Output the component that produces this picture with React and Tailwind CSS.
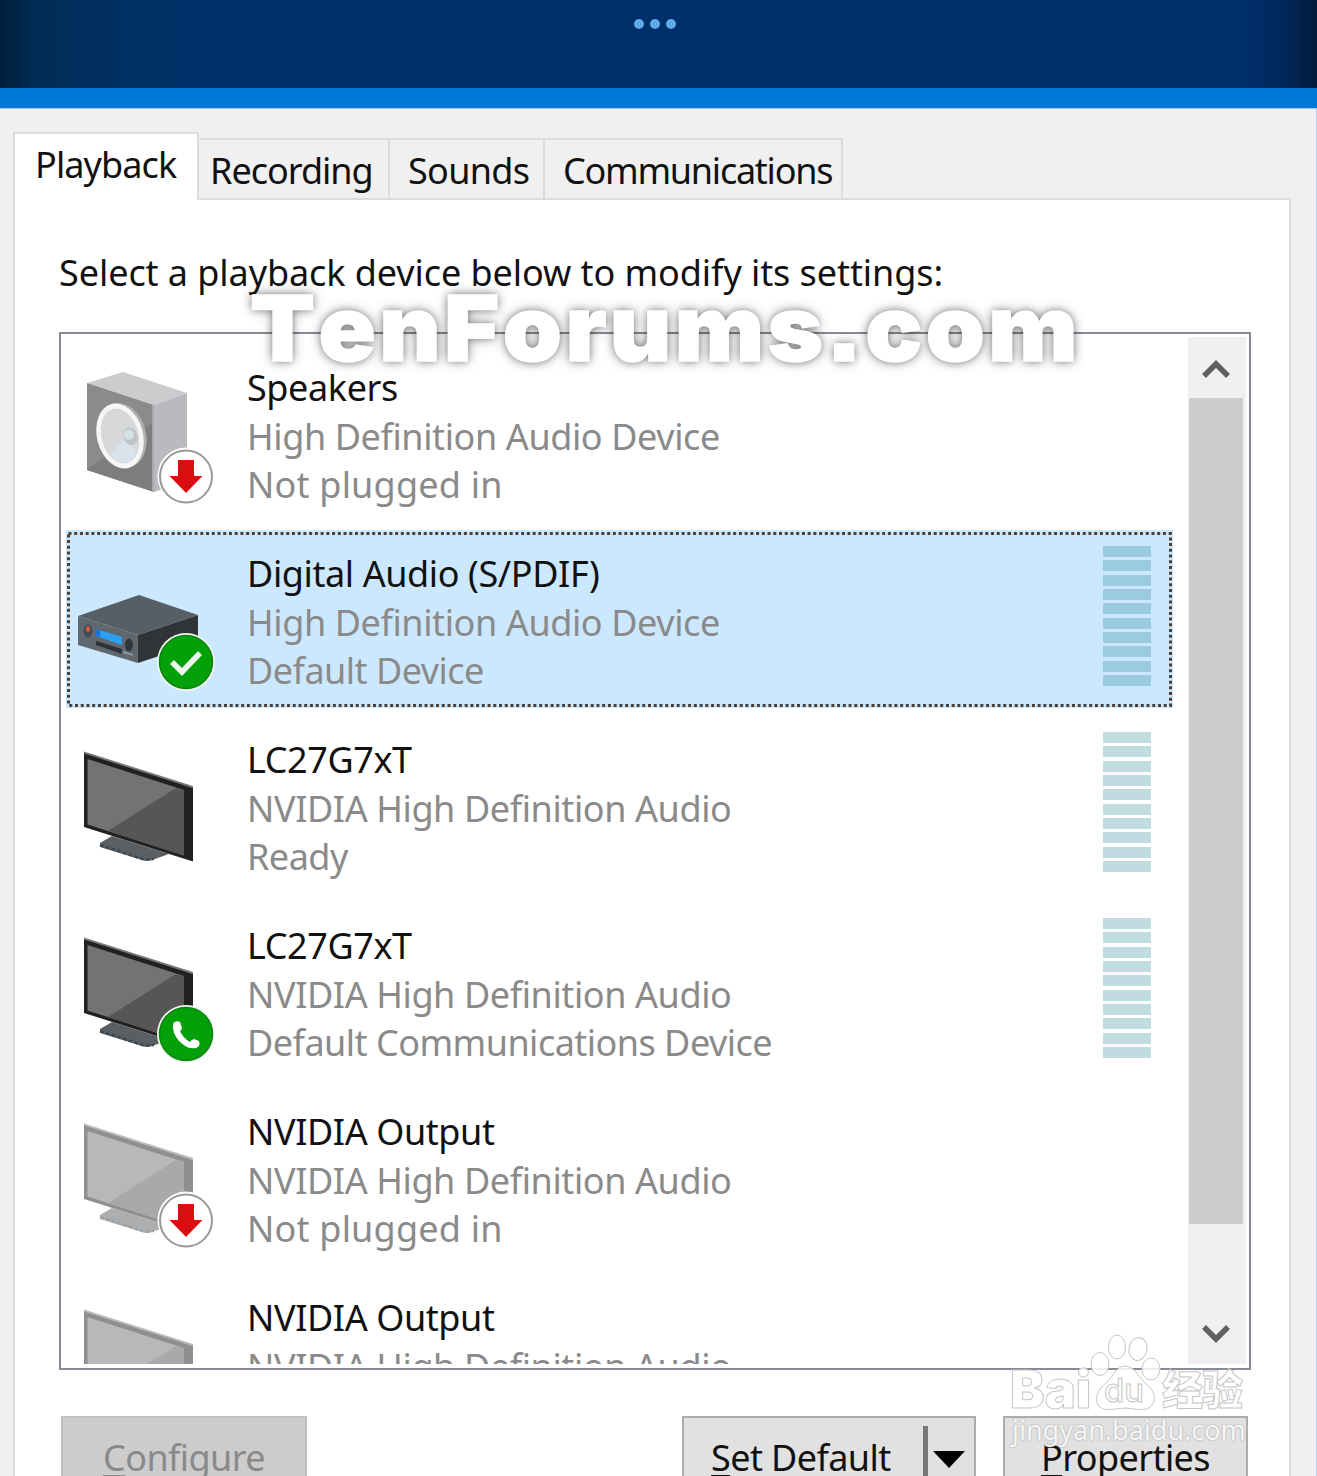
import clsx from 'clsx';

const devices = [
  { id: 1, name: 'Speakers', driver: 'High Definition Audio Device', status: 'Not plugged in', icon: 'speaker', badge: 'down' },
  { id: 2, name: 'Digital Audio (S/PDIF)', driver: 'High Definition Audio Device', status: 'Default Device', icon: 'receiver', badge: 'check', meter: true, selected: true },
  { id: 3, name: 'LC27G7xT', driver: 'NVIDIA High Definition Audio', status: 'Ready', icon: 'tv', meter: true },
  { id: 4, name: 'LC27G7xT', driver: 'NVIDIA High Definition Audio', status: 'Default Communications Device', icon: 'tv', badge: 'phone', meter: true },
  { id: 5, name: 'NVIDIA Output', driver: 'NVIDIA High Definition Audio', status: 'Not plugged in', icon: 'tv', badge: 'down', faded: true },
  { id: 6, name: 'NVIDIA Output', driver: 'NVIDIA High Definition Audio', status: 'Not plugged in', icon: 'tv', badge: 'down', faded: true },
];

const tabs = [
  { label: 'Recording', className: 'w-[191px] pl-[11px] tracking-[-1px]' },
  { label: 'Sounds', className: 'w-[155px] pl-[18px] tracking-[-0.700px]' },
  { label: 'Communications', className: 'w-[298px] pl-[18px] tracking-[-1.250px]' },
];

function Speaker() {
  return (
    <g>
      <path d="M21 39 57 28 121 49 88 61Z" fill="#cbcccd" />
      <path d="M88 61 121 49V137L88 148Z" fill="#b9babf" />
      <path d="M21 39 88 61V148L21 126Z" fill="#8b8b8b" />
      <path d="M88 61V148L21 126 88 78Z" fill="#7d7d7d" />
      <path d="M87 61V148" stroke="#a9a9a9" strokeWidth="2" />
      <g transform="rotate(-15 54 92)">
        <ellipse cx="56" cy="92" rx="24" ry="33" fill="#b0b0b0" />
        <ellipse cx="54" cy="92" rx="23" ry="33" fill="#f6f6f6" />
        <ellipse cx="54" cy="92" rx="18.500" ry="28" fill="#d6d8d9" />
        <path d="M40 106 60 96 66 112Q60 120 53 120 44 116 40 106Z" fill="#dbe3ea" />
        <ellipse cx="64" cy="95" rx="7" ry="9" fill="#bfc3c5" />
        <ellipse cx="63" cy="93" rx="5" ry="5" fill="#d5e2e3" />
      </g>
    </g>
  );
}

function Receiver() {
  return (
    <g>
      <path d="M12 86 73 65 132 85 72 105Z" fill="#565f66" />
      <path d="M12 86 72 105V133L12 115Z" fill="#5f686e" />
      <path d="M72 105 132 85V113L72 133Z" fill="#303436" />
      <path d="M30 99 56 107V115L30 106Z" fill="#2ba0f5" />
      <path d="M30 99 34 100V107.500L30 106Z" fill="#1b72dd" />
      <path d="M30 111 56 119V124L30 115Z" fill="#2e3236" />
      <ellipse cx="22" cy="101" rx="4.500" ry="6.500" fill="#454b50" />
      <ellipse cx="22" cy="99" rx="2" ry="3" fill="#d9543c" />
      <ellipse cx="63" cy="115" rx="4" ry="6.500" fill="#31363a" />
      <path d="M57 122 67 125" stroke="#8d959a" strokeWidth="2" />
    </g>
  );
}

function Tv({ faded }) {
  return (
    <g opacity={faded ? 0.5 : 1}>
      <path d="M34 127 46 120 103 138 86 144Q81 146 76 144L34 131Z" fill="#5c5f61" />
      <path d="M34 129 78 143.500 88 143" stroke="#3e4952" strokeWidth="2.500" fill="none" strokeDasharray="4 2" />
      <path d="M18 35.500 127 70V72L18 40Z" fill="#777" />
      <path d="M18 37.500 127 72V145.500L18 111Z" fill="#212121" />
      <path d="M21.500 43 118 74V139.500L21.500 108.500Z" fill="#737373" />
      <path d="M118 74V139.500L42 115 110 72Z" fill="#565656" />
    </g>
  );
}

function Badge({ type }) {
  if (type === 'down') {
    return (
      <g>
        <circle cx="120" cy="132" r="28.500" fill="#fff" />
        <circle cx="120" cy="132.500" r="26" fill="#fff" stroke="#999" strokeWidth="2" />
        <path d="M112 116H128V132H136.500L120 149 103.500 132H112Z" fill="#da0d10" />
      </g>
    );
  }

  return (
    <g>
      <circle cx="120" cy="132" r="29" fill="#f3f7f3" />
      <circle cx="120" cy="132" r="26.500" fill="#04a00a" stroke="#0a8410" strokeWidth="1.500" />
      {type === 'check' && <path d="M106 132 116 142 134 123" fill="none" stroke="#eef5ee" strokeWidth="5.500" />}
      {type === 'phone' && (
        <path
          d="M107 122Q109 118 114 120L116 126Q115 129 114 129Q117 136 124 140Q125 138 128 137L133 139Q135 144 130 146Q122 148 113 139Q106 131 107 122Z"
          fill="#fff"
        />
      )}
    </g>
  );
}

function DeviceIcon({ icon, badge, faded }) {
  return (
    <svg viewBox="0 0 160 178" className="h-[178px] w-[160px] shrink-0">
      {icon === 'speaker' && <Speaker />}
      {icon === 'receiver' && <Receiver />}
      {icon === 'tv' && <Tv faded={faded} />}
      {badge && <Badge type={badge} />}
    </svg>
  );
}

function Meter({ selected }) {
  return (
    <div className="mt-4 mr-[22px] ml-auto flex h-[140px] w-[48px] flex-col justify-between">
      {Array.from({ length: 10 }, (_, i) => (
        <div key={i} className={clsx('h-[11px]', selected ? 'bg-[#9bcbe1]' : 'bg-[#c1dce1]')} />
      ))}
    </div>
  );
}

function DeviceRow({ device }) {
  return (
    <div className={clsx('relative mb-2 flex h-[178px] w-[1107px] shrink-0', device.selected && 'bg-[#cce8ff]')}>
      <DeviceIcon icon={device.icon} badge={device.badge} faded={device.faded} />
      <div className="ml-[21px] pt-[20px] leading-[48.700px] tracking-[-0.400px] whitespace-nowrap text-[#8a8a8a]">
        <p className="text-[#111]">{device.name}</p>
        <p>{device.driver}</p>
        <p className={device.badge === 'down' ? 'tracking-[0.200px]' : 'tracking-[-0.520px]'}>{device.status}</p>
      </div>
      {device.meter && <Meter selected={device.selected} />}
      {device.selected && (
        <svg className="absolute inset-0 h-full w-full">
          <rect x="2.500" y="3.500" width="1102" height="172" fill="none" stroke="#4b4038" strokeWidth="3" strokeDasharray="3 2.730" />
        </svg>
      )}
    </div>
  );
}

function Scrollbar() {
  return (
    <div className="ml-[15px] flex h-[1027px] w-[58px] flex-col bg-[#f0f0f0]">
      <div className="flex h-[61px] w-[55px] items-center justify-center">
        <svg width="28" height="22" viewBox="0 0 28 22">
          <path d="M2 19 14 7 26 19" fill="none" stroke="#606060" strokeWidth="5.500" />
        </svg>
      </div>
      <div className="ml-px h-[826px] w-[54px] bg-[#cdcdcd]" />
      <div className="flex h-[140px] w-[55px] items-end justify-center pb-[19px]">
        <svg width="28" height="22" viewBox="0 0 28 22">
          <path d="M2 4 14 16 26 4" fill="none" stroke="#606060" strokeWidth="5.500" />
        </svg>
      </div>
    </div>
  );
}

// Button text with its access key underlined
function Label({ text }) {
  return (
    <span className="tracking-[-0.600px]">
      <span className="underline decoration-[3px] underline-offset-[4px]">{text[0]}</span>
      {text.slice(1)}
    </span>
  );
}

function Watermarks() {
  return (
    <>
      <div className="absolute top-[264px] left-[250px] origin-left scale-x-[1.04] font-['Inter'] text-[91px] leading-[128px] font-black tracking-[3.300px] whitespace-nowrap text-white [font-feature-settings:'ss07'] [font-kerning:none] [-webkit-text-stroke:1.500px_white] [text-shadow:0_0_12px_rgba(0,0,0,0.4),0_0_7px_rgba(0,0,0,0.35)]">
        TenForums.com
      </div>
      <svg className="absolute top-[1330px] left-[1000px]" width="260" height="120" viewBox="1000 1330 260 120">
        <g fill="#fff" fillOpacity="0.85" stroke="#c6c6c6" strokeWidth="1">
          <ellipse cx="1100" cy="1364" rx="9" ry="11.500" />
          <ellipse cx="1117" cy="1347" rx="8.500" ry="12" />
          <ellipse cx="1138" cy="1349" rx="9" ry="11.500" transform="rotate(12 1138 1349)" />
          <ellipse cx="1151" cy="1369" rx="9" ry="11" />
          <path d="M1125 1366C1116 1366 1114 1376 1106 1383C1098 1390 1094 1398 1098 1405C1103 1412 1113 1409 1125 1408C1138 1409 1147 1412 1152 1405C1157 1398 1154 1390 1146 1384C1138 1376 1134 1366 1125 1366Z" />
          <text x="1010" y="1408" fontFamily="Inter, sans-serif" fontWeight="900" fontSize="52" textLength="81" lengthAdjust="spacingAndGlyphs">Bai</text>
          <text x="1104" y="1402" fontFamily="Inter, sans-serif" fontWeight="500" fontSize="32" textLength="40" lengthAdjust="spacingAndGlyphs">du</text>
          <text x="1162" y="1405" fontFamily="'Noto Sans CJK SC', sans-serif" fontWeight="900" fontSize="41" textLength="81">经验</text>
        </g>
      </svg>
      <div className="absolute top-[1412px] left-[1012px] font-['Noto_Sans'] text-[27px] leading-[36px] whitespace-nowrap text-white/90 [text-shadow:0_0_2px_rgba(0,0,0,0.35)]">
        jingyan.baidu.com
      </div>
    </>
  );
}

export default function App() {
  return (
    <div className="relative h-[1476px] w-[1317px] overflow-hidden bg-[#f0f0f0] font-['Noto_Sans',sans-serif] text-[36px] text-[#111]">
      <header className="flex h-[88px] justify-center gap-[6px] bg-[linear-gradient(90deg,#001d3a_0,#002c55_35px,#003064_130px,#002f6b_260px,#002f6b_1240px,#002a60_1275px,#001a3c_1317px)] pt-[19px] pr-[7px]">
        <span className="size-[10px] rounded-full bg-[#5ea9e8]" />
        <span className="size-[10px] rounded-full bg-[#5ea9e8]" />
        <span className="size-[10px] rounded-full bg-[#5ea9e8]" />
      </header>
      <div className="h-[21px] border-b border-[#9cc8ee] bg-[#0078d7]" />

      <main className="h-[1367px] border-r border-[#b4d2f0] pt-[23px] pl-[13px]">
        <nav className="relative z-10 flex h-[68px] items-end leading-[61px] whitespace-nowrap">
          <div className="h-[68px] w-[186px] border-2 border-b-0 border-[#dcdcdc] bg-white pl-[20px] tracking-[-0.900px]">Playback</div>
          {tabs.map((tab) => (
            <div key={tab.label} className={clsx('h-[62px] border-t-2 border-r-2 border-b-2 border-[#dcdcdc]', tab.className)}>
              {tab.label}
            </div>
          ))}
        </nav>

        <section className="-mt-[2px] h-[1300px] w-[1278px] border-2 border-[#dcdcdc] bg-white pt-[47px] pl-[44px]">
          <p className="leading-[52px] tracking-[-0.070px] whitespace-nowrap">Select a playback device below to modify its settings:</p>

          <div className="mt-[33px] h-[1038px] w-[1192px] border-[2.500px] border-[#868b95] pt-[3px] pl-[5px]">
            <div className="flex h-[1027px] overflow-hidden">
              <div className="flex flex-col pt-[7px]">
                {devices.map((device) => (
                  <DeviceRow key={device.id} device={device} />
                ))}
              </div>
              <Scrollbar />
            </div>
          </div>

          <div className="mt-[46px] ml-[2px] flex leading-[80px] whitespace-nowrap">
            <button className="h-[80px] w-[246px] border-2 border-[#bfbfbf] bg-[#cccccc] text-[#8a8a8a]" disabled>
              <Label text="Configure" />
            </button>
            <button className="ml-[375px] flex h-[80px] w-[294px] border-2 border-[#adadad] bg-[#e1e1e1] pl-[27px]">
              <Label text="Set Default" />
              <span className="mt-[8px] ml-auto h-[70px] w-[5px] bg-[#777]" />
              <svg width="32" height="18" viewBox="0 0 32 18" className="mt-[33px] mr-[9px] ml-[5px]">
                <path d="M0 0H32L16 17Z" fill="#000" />
              </svg>
            </button>
            <button className="ml-[27px] h-[80px] w-[245px] border-2 border-[#adadad] bg-[#e1e1e1]">
              <Label text="Properties" />
            </button>
          </div>
        </section>
      </main>

      <Watermarks />
    </div>
  );
}
